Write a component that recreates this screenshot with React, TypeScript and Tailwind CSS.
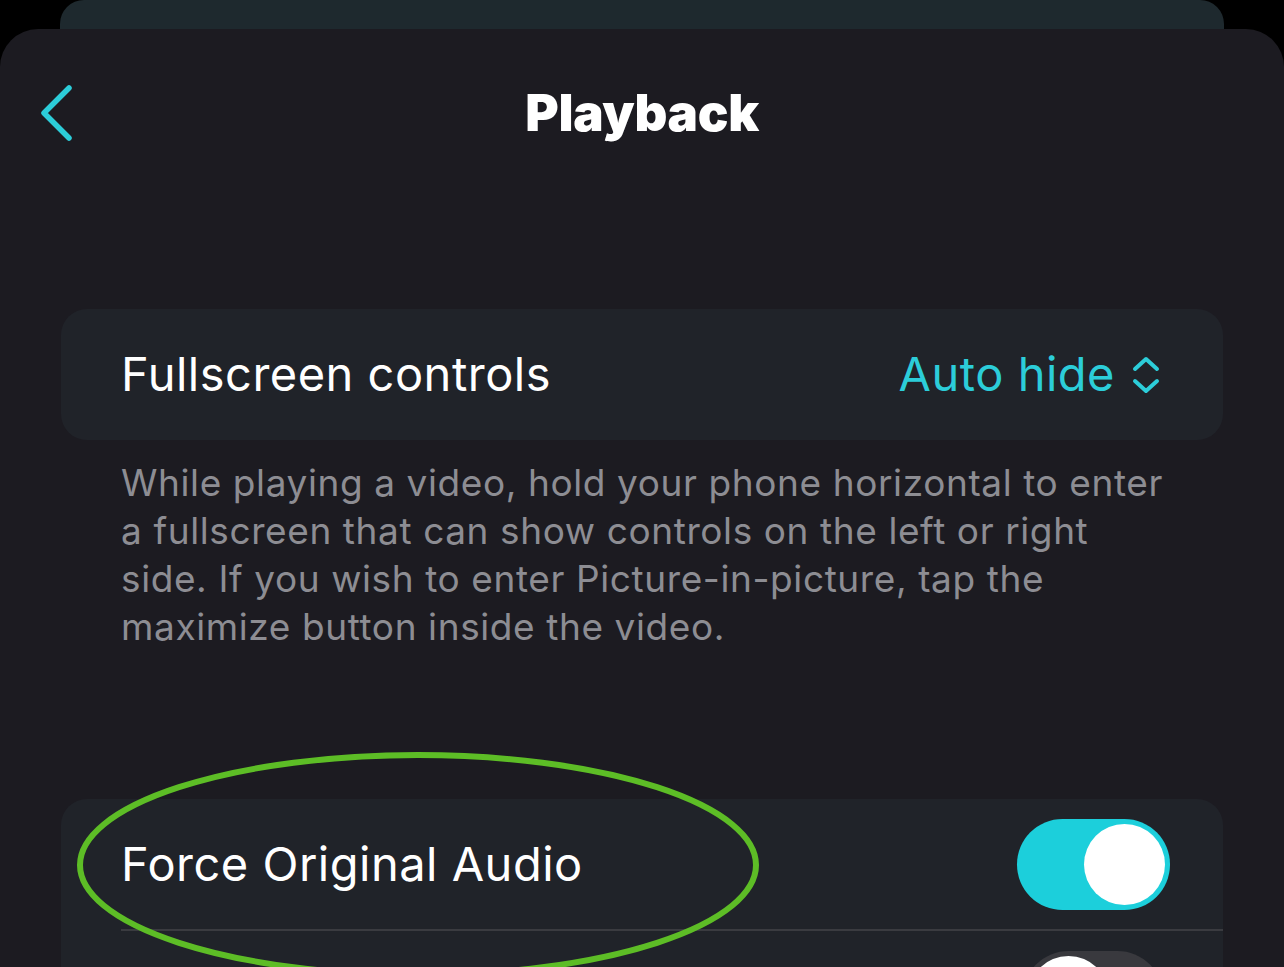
import React from "react";

export default function App() {
  return (
    <div
      className="relative w-[1284px] h-[967px] overflow-hidden bg-black"
      style={{ fontFamily: "Inter, 'Noto Sans', sans-serif" }}
    >
      <div className="mx-[60px] h-[60px] rounded-t-[24px] bg-[#1e292e]" />
      <div className="relative -mt-[31px] h-[940px] rounded-t-[38px] bg-[#1c1b21]">
        {/* header */}
        <div className="relative flex h-[170px] items-start justify-center pt-[56px]">
          <button className="absolute left-[35px] top-[52px] text-[#2ccdd9]">
            <svg width="44" height="64" viewBox="0 0 44 64" fill="none">
              <path
                d="M34 7 L9 32 L34 57"
                stroke="currentColor"
                strokeWidth="5.5"
                strokeLinecap="round"
                strokeLinejoin="round"
              />
            </svg>
          </button>
          <h1 className="text-[51px] leading-[56px] font-black tracking-[-0.3px] text-white">
            Playback
          </h1>
        </div>

        <div className="px-[61px] pt-[110px]">
          <div className="flex h-[131px] items-center justify-between rounded-[26px] bg-[#202329] pl-[60px] pr-[62px]">
            <span className="text-[47px] text-white tracking-[0.5px]">Fullscreen controls</span>
            <span className="flex items-center gap-[16px] text-[47px] text-[#2ccdd9] tracking-[0.5px]">
              Auto hide
              <svg width="30" height="40" viewBox="0 0 30 40" fill="none">
                <path
                  d="M4 14 L15 4 L26 14 M4 26 L15 36 L26 26"
                  stroke="currentColor"
                  strokeWidth="4"
                  strokeLinecap="round"
                  strokeLinejoin="round"
                />
              </svg>
            </span>
          </div>
          <p className="mt-[19px] pl-[60px] pr-[50px] text-[37px] leading-[48px] text-[#8d8d93] tracking-[0.6px]">
            While playing a video, hold your phone horizontal to enter a fullscreen that can show controls
            on the left or right side. If you wish to enter Picture-in-picture, tap the maximize button
            inside the video.
          </p>

          <div className="mt-[148px] rounded-t-[26px] bg-[#202329]">
            <div className="flex h-[130px] items-center justify-between pl-[60px] pr-[53px]">
              <span className="text-[47px] text-white tracking-[0.5px]">Force Original Audio</span>
              <div className="flex h-[91px] w-[153px] items-center justify-end rounded-full bg-[#1ccfdb] pr-[5px]">
                <div className="h-[81px] w-[81px] rounded-full bg-white" />
              </div>
            </div>
            <div className="ml-[60px] h-[1.5px] bg-[#3a3b40]" />
            <div className="flex h-[130px] items-start justify-end pr-[60px] pt-[20px]">
              <div className="flex h-[91px] w-[140px] items-center rounded-full bg-[#39393e] pl-[5px]">
                <div className="h-[81px] w-[81px] rounded-full bg-white" />
              </div>
            </div>
          </div>
        </div>
      </div>

      {/* annotation ellipse */}
      <svg className="pointer-events-none absolute left-0 top-0" width="1284" height="967">
        <ellipse cx="418" cy="865" rx="338" ry="110" fill="none" stroke="#5dbd26" strokeWidth="6" />
      </svg>
    </div>
  );
}
